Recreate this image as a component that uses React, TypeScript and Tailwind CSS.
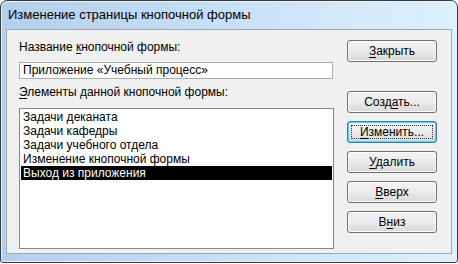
const FONT = "font-['Liberation_Sans',Arial,sans-serif]";

const ITEMS = [
  "Задачи деканата",
  "Задачи кафедры",
  "Задачи учебного отдела",
  "Изменение кнопочной формы",
  "Выход из приложения",
];

function Btn({
  pre,
  acc,
  post,
  focused,
  className = "",
}: {
  pre: string;
  acc: string;
  post: string;
  focused?: boolean;
  className?: string;
}) {
  return (
    <div
      className={`relative flex h-[22px] w-[90px] items-center justify-center rounded-[3px] border bg-gradient-to-b from-[#f4f4f4] via-[#ebebeb] to-[#d9d9d9] text-[12px] text-black ${
        focused ? "border-[#3c7fb1] shadow-[inset_0_0_0_1px_#48d1f8]" : "border-[#707070] shadow-[inset_0_0_0_1px_#fcfcfc]"
      } ${className}`}
    >
      {focused && (
        <span className="pointer-events-none absolute inset-[3px] border border-dotted border-[#333]" />
      )}
      <span className="relative -mt-px">
        {pre}
        <span className="underline underline-offset-2">{acc}</span>
        {post}
      </span>
    </div>
  );
}

export default function App() {
  return (
    <div className={`h-[264px] w-[458px] bg-white ${FONT}`}>
      <div className="flex h-[263px] w-[458px] flex-col rounded-t-[7px] rounded-b-[3px] border border-[#3b3b3b] bg-gradient-to-r from-[#b4cfec] via-[#c8e0f6] to-[#dff0fc] px-[5px] pb-[8px] shadow-[inset_0_0_0_1px_#e6f1fb]">
        {/* title bar */}
        <div className="flex h-[28px] shrink-0 items-center pl-[2px] text-[13px] text-black">
          Изменение страницы кнопочной формы
        </div>

        {/* client area */}
        <div className="flex flex-1 border border-[#98a8b8] bg-[#f0f0f0] text-[12px] text-black">
          <div className="flex w-[327px] flex-col pl-[12px] pt-[10px]">
            <div className="h-[15px] leading-[15px]">
              Название <span className="underline underline-offset-2">к</span>нопочной формы:
            </div>
            <div className="mt-[7px] flex h-[17px] w-[314px] items-center border border-[#abadb3] bg-white pl-[3px] leading-[15px]">
              Приложение «Учебный процесс»
            </div>
            <div className="mt-[6px] h-[15px] leading-[15px]">
              <span className="underline underline-offset-2">Э</span>лементы данной кнопочной формы:
            </div>
            <div className="mt-[8px] flex h-[141px] w-[315px] flex-col border border-[#828790] bg-white p-px">
              {ITEMS.map((t, i) => (
                <div
                  key={t}
                  className={`h-[14px] pl-[2px] leading-[14px] ${
                    i === ITEMS.length - 1 ? "bg-black text-white" : ""
                  }`}
                >
                  {t}
                </div>
              ))}
            </div>
          </div>

          <div className="ml-[13px] flex flex-col pt-[10px]">
            <Btn pre="" acc="З" post="акрыть" />
            <Btn pre="Созд" acc="а" post="ть..." className="mt-[29px]" />
            <Btn pre="" acc="И" post="зменить..." focused className="mt-[8px]" />
            <Btn pre="" acc="У" post="далить" className="mt-[8px]" />
            <Btn pre="" acc="В" post="верх" className="mt-[8px]" />
            <Btn pre="В" acc="н" post="из" className="mt-[8px]" />
          </div>
        </div>
      </div>
    </div>
  );
}
